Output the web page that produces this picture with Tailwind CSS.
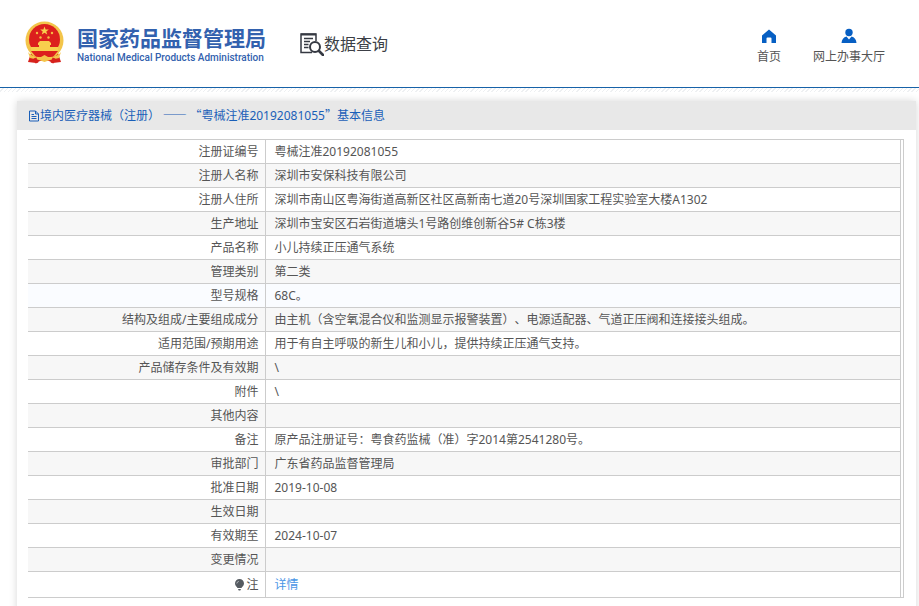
<!DOCTYPE html>
<html lang="zh-CN">
<head>
    <meta charset="UTF-8">
    <meta name="viewport" content="width=device-width, initial-scale=1.0">
    <title>国家药品监督管理局 - 数据查询</title>
    <!-- Tailwind CSS -->
    <script src="https://cdn.jsdelivr.net/npm/@tailwindcss/browser@4"></script>
</head>
<body class="bg-white font-['Noto_Sans','Noto_Sans_CJK_SC',sans-serif] text-xs text-[#555] [text-spacing-trim:space-all]">
    <!-- Header -->
    <header class="flex h-[88px] items-start justify-between border-b border-[#1762a8] pl-6 pr-[34px]">
        <div class="flex items-start">
            <a href="#" class="mt-5 flex items-start gap-3 text-[#3261ae]">
                <svg class="h-[45px] w-[41px]" viewBox="0 0 41 45" role="img" aria-label="国徽">
                    <path d="M7 33 L4 42 L12 43 L16 41 H25 L29 43 L37 42 L34 33 Z" fill="#d7221c"/>
                    <circle cx="20.500" cy="20.500" r="19" fill="#f3c54a"/>
                    <circle cx="20.500" cy="19.500" r="15.500" fill="#dc1f1d"/>
                    <path d="M20.500 6.500 l1.100 3 h3.200 l-2.500 2 .9 3.100 -2.700 -1.800 -2.700 1.800 .9 -3.100 -2.500 -2 h3.200z" fill="#f8cf4d"/>
                    <g fill="#f5bd45">
                        <circle cx="13" cy="13" r="1.200"/><circle cx="28" cy="13" r="1.200"/>
                        <circle cx="16.500" cy="17.500" r="1.200"/><circle cx="24.500" cy="17.500" r="1.200"/>
                    </g>
                    <path d="M14 23 l2 -2 h9 l2 2 v2 h-1 v2 h8 v4 H7 v-4 h8 v-2 h-1z" fill="#f8cf4d"/>
                    <path d="M7 31 H34 L29 37 H12Z" fill="#dc1f1d"/>
                    <path d="M4 32 C8 37 14 37 17 37 L20.500 35 L24 37 C27 37 33 37 37 32 L35 38 L26 40 L20.500 42 L15 40 L6 38Z" fill="#f3c54a"/>
                    <path d="M11 38 L13 43 M30 38 L28 43" fill="none" stroke="#d7221c" stroke-width="3"/>
                </svg>
                <span class="mt-1 block whitespace-nowrap">
                    <span class="block text-[21px] leading-7 font-bold">国家药品监督管理局</span>
                    <span class="block font-[Roboto,sans-serif] text-[10px] leading-3 font-medium">National Medical Products Administration</span>
                </span>
            </a>
            <a href="#" class="mt-8 ml-[34px] flex items-center text-[#3c3f46]">
                <svg class="size-6" viewBox="0 0 24 24" fill="none" stroke="#353942" aria-hidden="true">
                    <path d="M16 9 V2 H1 V20.500 H12" stroke-width="1.500"/>
                    <path d="M1 2.500 H16" stroke-width="2"/>
                    <path d="M4 6.500 H13 M4 9.500 H10 M4 12.500 H8.500 M4 15.500 H8.500" stroke-width="1.300"/>
                    <circle cx="15" cy="15" r="5" stroke-width="2"/>
                    <path d="M19 19 L23 23" stroke-width="2.600" stroke-linecap="round"/>
                </svg>
                <span class="text-base leading-6">数据查询</span>
            </a>
        </div>
        <nav class="mt-7 flex gap-8 leading-5">
            <a href="#" class="flex flex-col items-center gap-[3px]">
                <svg class="size-4" viewBox="0 0 16 16" fill="#075fc3" aria-hidden="true">
                    <path d="M8 1.500 L15 7.500 V15 H10.500 V10.500 Q10.500 9.500 9.500 9.500 H6.500 Q5.500 9.500 5.500 10.500 V15 H1 V7.500Z"/>
                </svg>
                <span>首页</span>
            </a>
            <a href="#" class="flex flex-col items-center gap-[3px]">
                <svg class="size-4" viewBox="0 0 16 16" fill="#075fc3" aria-hidden="true">
                    <circle cx="8" cy="4.500" r="3.700"/>
                    <path d="M0.500 15 Q1 9.500 5.500 8.500 L8 11.500 L10.500 8.500 Q15 9.500 15.500 15Z"/>
                </svg>
                <span>网上办事大厅</span>
            </a>
        </nav>
    </header>
    <!-- Hatched strip under the header -->
    <div class="h-1 bg-[repeating-linear-gradient(135deg,#ffffff_0px,#ffffff_2px,#eef0f2_2px,#eef0f2_3px)]"></div>

    <!-- Detail panel -->
    <main class="mt-[9px] mr-[3px] ml-[17px] bg-white pb-4 shadow-[0_0_8px_rgba(0,0,0,0.16)]">
        <h1 class="flex h-[29px] items-center bg-[#e8e8e8] pl-[11px] text-[#1a5fb8]">
            <svg class="h-3 w-3" viewBox="0 0 12 12" fill="none" stroke="#1a5fb8" aria-hidden="true">
                <path d="M1.500 1 H7.500 L10.500 4 V11 H1.500Z M7.500 1 V4 H10.500 M3.500 4.500 H6 M3.500 6.500 H8.500 M3.500 8.500 H8.500"/>
            </svg>
            <span class="whitespace-pre font-['Noto_Sans_CJK_SC',sans-serif]">境内医疗器械（注册） —— “粤械注准<span class="font-['Noto_Sans',sans-serif]">20192081055</span>”基本信息</span>
        </h1>
        <div class="mt-[9px] mr-3 ml-[11px] border-y border-r border-[#ccc] pr-0.5">
            <table class="w-full border-collapse leading-[23px] [&_td]:border [&_td]:border-[#ccc] [&_td]:py-0 [&_td]:pr-2 [&_td]:pl-[9px] [&_th]:w-[237px] [&_th]:border-y [&_th]:border-[#ccc] [&_th]:py-0 [&_th]:pr-1.5 [&_th]:text-right [&_th]:font-normal [&_tr]:h-6 [&_tr:first-child]:h-[23px] [&_tr:first-child>*]:border-t-0 [&_tr:last-child>*]:border-b-0 [&_tr:nth-child(even)]:bg-[#f7f7f7]">
                <tbody>
                    <tr><th scope="row">注册证编号</th><td>粤械注准20192081055</td></tr>
                    <tr><th scope="row">注册人名称</th><td>深圳市安保科技有限公司</td></tr>
                    <tr><th scope="row">注册人住所</th><td>深圳市南山区粤海街道高新区社区高新南七道20号深圳国家工程实验室大楼A1302</td></tr>
                    <tr><th scope="row">生产地址</th><td>深圳市宝安区石岩街道塘头1号路创维创新谷5# C栋3楼</td></tr>
                    <tr><th scope="row">产品名称</th><td>小儿持续正压通气系统</td></tr>
                    <tr><th scope="row">管理类别</th><td>第二类</td></tr>
                    <tr class="bg-[#fafcff]"><th scope="row">型号规格</th><td>68C。</td></tr>
                    <tr><th scope="row">结构及组成/主要组成成分</th><td>由主机（含空氧混合仪和监测显示报警装置）、电源适配器、气道正压阀和连接接头组成。</td></tr>
                    <tr><th scope="row">适用范围/预期用途</th><td>用于有自主呼吸的新生儿和小儿，提供持续正压通气支持。</td></tr>
                    <tr><th scope="row">产品储存条件及有效期</th><td>\</td></tr>
                    <tr><th scope="row">附件</th><td>\</td></tr>
                    <tr><th scope="row">其他内容</th><td></td></tr>
                    <tr><th scope="row">备注</th><td>原产品注册证号：粤食药监械（准）字2014第2541280号。</td></tr>
                    <tr><th scope="row">审批部门</th><td>广东省药品监督管理局</td></tr>
                    <tr><th scope="row">批准日期</th><td>2019-10-08</td></tr>
                    <tr><th scope="row">生效日期</th><td></td></tr>
                    <tr><th scope="row">有效期至</th><td>2024-10-07</td></tr>
                    <tr><th scope="row">变更情况</th><td></td></tr>
                    <tr class="leading-[25px]">
                        <th scope="row">
                            <span class="flex items-center justify-end">
                                <svg class="h-3 w-3" viewBox="0 0 12 12" aria-hidden="true">
                                    <path d="M5.500 0 A4.500 4.500 0 0 1 10 4.500 C10 7 8 7.500 7.500 9 H3.500 C3 7.500 1 7 1 4.500 A4.500 4.500 0 0 1 5.500 0Z M4 10 H7 L6.300 11.500 H4.700Z" fill="#555b61"/>
                                    <path d="M2.800 4.500 Q3 2.700 4.800 2.400" fill="none" stroke="#c9ccd0" stroke-width="0.800"/>
                                </svg>注
                            </span>
                        </th>
                        <td><a href="#" class="text-[#4a96e6]">详情</a></td>
                    </tr>
                </tbody>
            </table>
        </div>
    </main>
</body>
</html>
